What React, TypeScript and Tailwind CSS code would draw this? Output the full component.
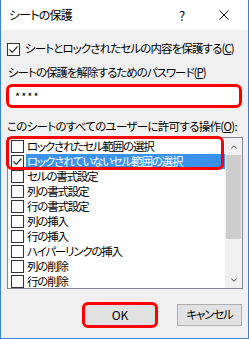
import { ChevronUp, ChevronDown } from 'lucide-react';

const items = [
  'ロックされたセル範囲の選択',
  'ロックされていないセル範囲の選択',
  'セルの書式設定',
  '列の書式設定',
  '行の書式設定',
  '列の挿入',
  '行の挿入',
  'ハイパーリンクの挿入',
  '列の削除',
  '行の削除',
];

const font = "font-['Noto_Sans_CJK_JP',sans-serif] [font-feature-settings:'palt']";

const Check = ({ checked }: { checked: boolean }) => (
  <div className="w-[13px] h-[13px] border border-[#333333] bg-white flex items-center justify-center shrink-0">
    {checked && (
      <svg width="11" height="11" viewBox="0 0 11 11">
        <path d="M1.5 5.5 L4.2 8.3 L9.5 2.5" fill="none" stroke="#333" strokeWidth="1.2" />
      </svg>
    )}
  </div>
);

const App = () => (
  <div className={`w-[249px] h-[339px] bg-[#f0f0f0] flex flex-col text-[11.5px] leading-none text-black whitespace-nowrap tracking-[-1.2px] border-x border-b border-[#3b83d0] ${font}`}>
    <div className="h-[30px] bg-white flex items-center pl-[8px] shrink-0">
      <span className="text-[12px] tracking-[-0.8px]">シートの保護</span>
      <span className="ml-auto mr-[35px] text-[13px]">?</span>
      <svg width="10" height="10" viewBox="0 0 10 10" className="mr-[19px]">
        <path d="M0.5 0.5 L9.5 9.5 M9.5 0.5 L0.5 9.5" stroke="#111" strokeWidth="1" />
      </svg>
    </div>

    <div className="mt-[12px] ml-[6px] h-[14px] flex items-center gap-[5px]">
      <Check checked />
      <span className="tracking-[-0.9px]">
        シートとロックされたセルの内容を保護する(<u>C</u>)
      </span>
    </div>

    <div className="mt-[10px] ml-[7px] h-[14px] flex items-center">
      <span className="tracking-[-1px]">
        シートの保護を解除するためのパスワード(<u>P</u>)
      </span>
    </div>

    <div className="mt-[4px] mx-[5px] w-[236px] h-[24px] bg-white border-[3px] border-[#f00] rounded-[6px] flex items-center pl-[6px] text-[11px] tracking-[1px]">
      ****
    </div>

    <div className="mt-[12px] ml-[6px] h-[14px] flex items-center">
      <span className="tracking-[-0.7px]">
        このシートのすべてのユーザーに許可する操作(<u>O</u>):
      </span>
    </div>

    <div className="relative mt-[3px] ml-[6px] w-[236px] h-[152px] bg-white border border-[#828790] flex">
      <div className="flex-1 flex flex-col pt-px">
        {items.map((item, i) => (
          <div key={item} className="h-[15px] flex items-center pl-[3px]">
            <Check checked={i === 1} />
            <span
              className={`ml-[2px] h-[15px] flex-1 flex items-center pl-px ${i === 1 ? 'bg-[#3a92ec] text-white' : ''}`}
            >
              {item}
            </span>
          </div>
        ))}
      </div>
      <div className="w-[17px] bg-[#f0f0f0] flex flex-col items-center">
        <div className="h-[17px] flex items-center justify-center">
          <ChevronUp size={10} strokeWidth={2.5} color="#606060" />
        </div>
        <div className="w-[15px] h-[84px] bg-[#cdcdcd]" />
        <div className="mt-auto h-[17px] flex items-center justify-center">
          <ChevronDown size={10} strokeWidth={2.5} color="#606060" />
        </div>
      </div>
      <div className="absolute left-[-2px] top-[-2px] w-[218px] h-[34px] border-[3px] border-[#f00] rounded-[6px]" />
    </div>

    <div className="mt-[13px] flex items-start">
      <div className="ml-[81px] w-[76px] h-[26px] border-[3px] border-[#f00] rounded-[6px] bg-[#e1e1e1] flex items-center justify-center text-[12px] tracking-normal">
        OK
      </div>
      <div className="ml-[19px] mt-[2px] w-[65px] h-[22px] border border-[#adadad] bg-[#e1e1e1] flex items-center justify-center">
        キャンセル
      </div>
    </div>
  </div>
);

export default App;
